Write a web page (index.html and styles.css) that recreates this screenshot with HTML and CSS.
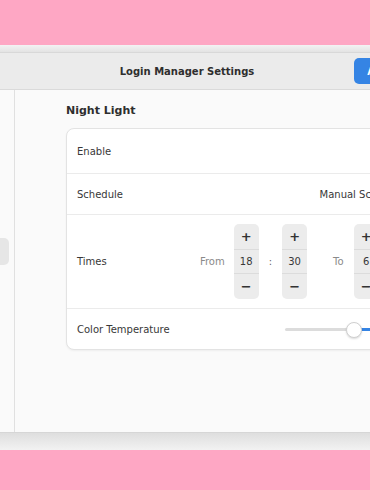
FILE: index.html
```html
<!DOCTYPE html>
<html lang="en">
<head>
    <meta charset="UTF-8">
    <meta name="viewport" content="width=device-width, initial-scale=1.0">
    <title>Login Manager Settings</title>
    <link rel="stylesheet" href="styles.css">
</head>
<body>
    <div class="screen">
        <div class="window-edge"></div>
        <div class="window">
            <header class="headerbar">
                <div></div>
                <div class="title">Login Manager Settings</div>
                <div class="header-end">
                    <button class="apply">Apply</button>
                </div>
            </header>

            <div class="main">
                <nav class="sidebar">
                    <div class="nav-item"></div>
                    <div class="nav-item"></div>
                    <div class="nav-item"></div>
                    <div class="nav-item"></div>
                    <div class="nav-item active"></div>
                    <div class="nav-item"></div>
                </nav>

                <section class="content">
                    <h2>Night Light</h2>
                    <div class="card">
                        <div class="row row-enable">
                            <span>Enable</span>
                            <div class="switch"><div class="knob"></div></div>
                        </div>
                        <div class="row">
                            <span>Schedule</span>
                            <div class="dropdown">
                                <span>Manual Schedule</span>
                                <svg width="11" height="11" viewBox="0 0 11 11"><path d="M2 4l3.5 3.5L9 4" fill="none" stroke="#333" stroke-width="1.4"/></svg>
                            </div>
                        </div>
                        <div class="row row-times">
                            <span>Times</span>
                            <div class="times">
                                <span class="dim from">From</span>
                                <div class="spin"><span class="btn">+</span><span class="val">18</span><span class="btn">−</span></div>
                                <span class="colon">:</span>
                                <div class="spin"><span class="btn">+</span><span class="val">30</span><span class="btn">−</span></div>
                                <span class="dim to">To</span>
                                <div class="spin"><span class="btn">+</span><span class="val">6</span><span class="btn">−</span></div>
                                <span class="colon">:</span>
                                <div class="spin"><span class="btn">+</span><span class="val">00</span><span class="btn">−</span></div>
                            </div>
                        </div>
                        <div class="row">
                            <span>Color Temperature</span>
                            <div class="slider">
                                <div class="track"></div>
                                <div class="thumb" style="left: 48.6%"></div>
                            </div>
                        </div>
                    </div>
                </section>
            </div>
        </div>
        <div class="window-shadow"></div>
    </div>
</body>
</html>
```

FILE: styles.css
```css
body {
    margin: 0;
    background-color: #fea7c4;
    font-family: "DejaVu Sans", sans-serif;
    font-size: 10px;
    color: #383838;
    overflow: hidden;
}
.screen {
    padding-top: 45px;
}
.window-edge {
    margin-left: -198px;
    width: 770px;
    height: 7px;
    background: linear-gradient(#f3f3f3, #e3e3e3);
    border-bottom: 1px solid #d8d8d8;
}
.window {
    margin-left: -198px;
    width: 770px;
    background-color: #fafafa;
    border-bottom: 1px solid #d6d6d6;
}
.headerbar {
    display: grid;
    grid-template-columns: 1fr auto 1fr;
    align-items: center;
    height: 36px;
    background-color: #ebebeb;
    border-bottom: 1px solid #dadada;
}
.title {
    font-weight: bold;
    color: #2e2e2e;
}
.header-end {
    padding-left: 100px;
}
.apply {
    height: 26px;
    padding: 0 13px;
    border: none;
    border-radius: 5px;
    background-color: #3584e4;
    color: #fff;
    font-family: inherit;
    font-size: 10px;
    font-weight: bold;
}
.main {
    display: flex;
    height: 342px;
}
.sidebar {
    width: 201px;
    padding: 20px 5px 0 6px;
    border-right: 1px solid #e0e0e0;
    display: flex;
    flex-direction: column;
    gap: 5px;
}
.nav-item {
    height: 27px;
    border-radius: 5px;
}
.nav-item.active {
    background-color: #e6e6e6;
}
.content {
    padding: 14px 0 0 51px;
}
h2 {
    margin: 0 0 10px;
    font-size: 11px;
    line-height: 14px;
    color: #2e2e2e;
}
.card {
    width: 372px;
    box-sizing: border-box;
    background-color: #fff;
    border: 1px solid #e3e3e3;
    border-radius: 8px;
    box-shadow: 0 1px 2px rgba(0,0,0,0.05);
}
.row {
    display: flex;
    align-items: center;
    justify-content: space-between;
    height: 40px;
    padding: 0 10px;
}
.row + .row {
    border-top: 1px solid #ebebeb;
}
.row-enable {
    height: 44px;
}
.row-times {
    height: auto;
    padding-top: 9px;
    padding-bottom: 9px;
}
.switch {
    width: 38px;
    height: 20px;
    border-radius: 10px;
    background-color: #e1e1e1;
    padding: 2px;
    box-sizing: border-box;
}
.knob {
    width: 16px;
    height: 16px;
    border-radius: 50%;
    background-color: #fff;
}
.dropdown {
    display: flex;
    align-items: center;
    gap: 11px;
}
.times {
    display: flex;
    align-items: center;
    gap: 10px;
}
.dim {
    color: #8a8a8a;
}
.from {
    margin-right: -1px;
}
.to {
    margin-left: 16px;
}
.spin {
    width: 25px;
    display: flex;
    flex-direction: column;
    background-color: #ececec;
    border-radius: 5px;
}
.spin span {
    display: flex;
    align-items: center;
    justify-content: center;
    height: 25px;
}
.spin .btn {
    font-size: 13px;
    font-weight: bold;
    color: #333;
}
.spin .val {
    height: 23px;
    border-top: 1px solid #dcdcdc;
    border-bottom: 1px solid #dcdcdc;
}
.colon {
    color: #666;
}
.slider {
    position: relative;
    width: 142px;
    height: 16px;
}
.track {
    height: 3px;
    margin-top: 7px;
    border-radius: 2px;
    background: linear-gradient(to right, #dcdcdc 48.6%, #3584e4 48.6%);
}
.thumb {
    position: absolute;
    top: 1px;
    width: 16px;
    height: 16px;
    margin-left: -8px;
    box-sizing: border-box;
    border: 1px solid #d0d0d0;
    border-radius: 50%;
    background-color: #fff;
    box-shadow: 0 1px 2px rgba(0,0,0,0.15);
}
.window-shadow {
    height: 17px;
    background: linear-gradient(#dedede, #f2f2f2);
}
```
